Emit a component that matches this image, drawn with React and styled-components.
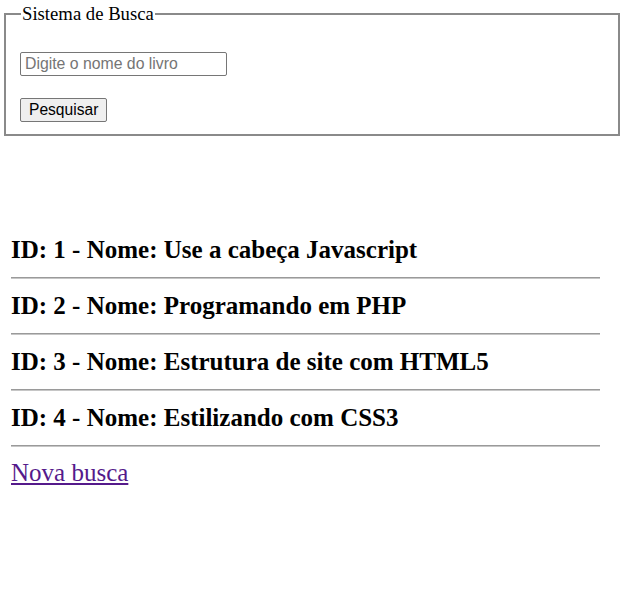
import React from "react";
import styled, { createGlobalStyle } from "styled-components";

const Global = createGlobalStyle`
  html, body { margin: 0; padding: 0; background: #ffffff; }
  body { font-family: "Liberation Serif", "Times New Roman", serif; color: #000; }
`;

const Page = styled.div`
  display: flex;
  flex-direction: column;
  padding: 3px 0 0 4px;
`;

const SearchBox = styled.fieldset`
  width: 616px;
  box-sizing: border-box;
  margin: 0;
  padding: 28px 14px 12px 14px;
  border: 2px solid #8a8a8a;
`;

const Legend = styled.legend`
  font-family: "Liberation Serif", "Times New Roman", serif;
  font-size: 18.7px;
  line-height: 21px;
  padding: 0 1px;
  margin-left: 1px;
`;

const Form = styled.form`
  display: flex;
  flex-direction: column;
  align-items: flex-start;
  gap: 22px;
`;

const Input = styled.input`
  box-sizing: border-box;
  width: 207px;
  height: 24px;
  padding: 1px 4px;
  border: 1px solid #767676;
  border-radius: 2px;
  font-family: "Liberation Sans", Arial, sans-serif;
  font-size: 15.8px;
  color: #000;
  &::placeholder { color: #757575; }
`;

const Button = styled.button`
  box-sizing: border-box;
  height: 24px;
  padding: 0 8px;
  border: 1px solid #767676;
  border-radius: 2px;
  background: #efefef;
  font-family: "Liberation Sans", Arial, sans-serif;
  font-size: 15.6px;
  color: #000;
`;

const Results = styled.div`
  display: flex;
  flex-direction: column;
  width: 589px;
  margin: 100px 0 0 7px;
`;

const Title = styled.h3`
  margin: 0;
  font-family: "Liberation Serif", "Times New Roman", serif;
  font-weight: bold;
  font-size: 25px;
  line-height: 28px;
`;

const Rule = styled.hr`
  margin: 13px 0;
  height: 0;
  border: none;
  border-top: 1px solid #9a9a9a;
  border-bottom: 1px solid #c6c6c6;
`;

const BackLink = styled.a`
  align-self: flex-start;
  margin-top: -1px;
  font-family: "Liberation Serif", "Times New Roman", serif;
  font-size: 25px;
  line-height: 28px;
  color: #551a8b;
  text-decoration: underline;
`;

const books = [
  { id: 1, nome: "Use a cabeça Javascript" },
  { id: 2, nome: "Programando em PHP" },
  { id: 3, nome: "Estrutura de site com HTML5" },
  { id: 4, nome: "Estilizando com CSS3" },
];

export default function App() {
  return (
    <Page>
      <Global />
      <SearchBox>
        <Legend>Sistema de Busca</Legend>
        <Form onSubmit={(e) => e.preventDefault()}>
          <Input type="text" placeholder="Digite o nome do livro" />
          <Button type="submit">Pesquisar</Button>
        </Form>
      </SearchBox>
      <Results>
        {books.map((b) => (
          <React.Fragment key={b.id}>
            <Title>ID: {b.id} - Nome: {b.nome}</Title>
            <Rule />
          </React.Fragment>
        ))}
        <BackLink href="#">Nova busca</BackLink>
      </Results>
    </Page>
  );
}
